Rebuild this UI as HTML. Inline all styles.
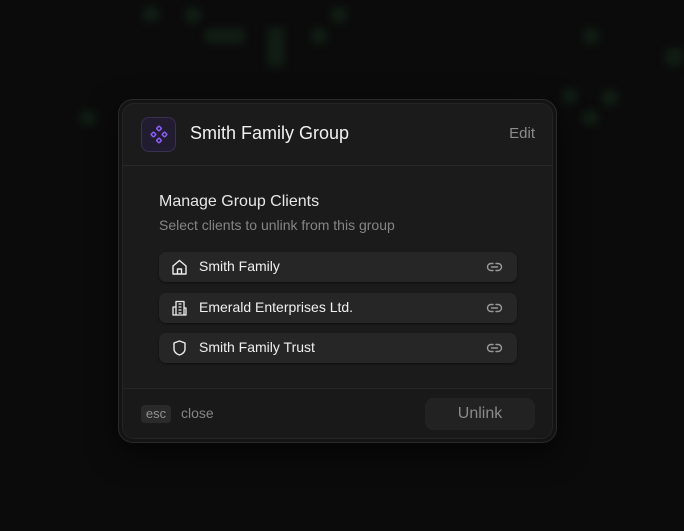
<!DOCTYPE html>
<html><head><meta charset="utf-8"><style>
*{margin:0;padding:0;box-sizing:border-box}
body{width:684px;height:531px;overflow:hidden;background:#0b0b0b;font-family:"Liberation Sans",sans-serif;position:relative}
.blob{position:absolute;border-radius:4px;background:#15281a;filter:blur(4px);opacity:.6}
.outer{position:absolute;left:118px;top:99px;width:439px;height:344px;border-radius:15px;background:#141414;border:1px solid #2a2a2a;box-shadow:0 10px 30px rgba(0,0,0,.6)}
.inner{position:absolute;left:3px;top:3px;right:3px;bottom:3px;border-radius:12px;background:#1b1b1b;border:1px solid #242424;overflow:hidden}
.hdr{position:absolute;left:0;top:0;right:0;height:62px;border-bottom:1px solid #282828}
.ico{position:absolute;left:18px;top:13px;width:35px;height:35px;border-radius:8px;background:#211c30;border:1px solid #3a3052}
.title{position:absolute;left:67px;top:19px;font-size:18px;color:#f0f0f0}
.edit{position:absolute;right:17px;top:21px;font-size:15px;color:#8c8c8c}
.h2{position:absolute;left:36px;top:89px;font-size:16px;color:#e6e6e6}
.sub{position:absolute;left:36px;top:113px;font-size:14px;color:#858585}
.row{position:absolute;left:36px;width:358px;height:30px;border-radius:7px;background:#262626;box-shadow:0 1px 2px rgba(0,0,0,.5)}
.row svg.l{position:absolute;left:12px;top:6px}
.row span{position:absolute;left:40px;top:6px;font-size:14px;color:#f0f0f0}
.row svg.r{position:absolute;right:14px;top:8px}
.ftr{position:absolute;left:0;right:0;bottom:0;height:50px;border-top:1px solid #262626;background:#191919}
.esc{position:absolute;left:18px;top:16px;width:30px;height:18px;border-radius:4px;background:#2a2a2a;color:#909090;font-size:13px;text-align:center;line-height:18px}
.close{position:absolute;left:58px;top:16px;font-size:14px;color:#858585}
.btn{position:absolute;right:17px;top:9px;width:110px;height:32px;border-radius:8px;background:#222;color:#8a8a8a;font-size:16px;text-align:center;line-height:32px}
</style></head><body>
<div class="blob" style="left:143px;top:6px;width:16px;height:16px"></div>
<div class="blob" style="left:185px;top:7px;width:16px;height:16px"></div>
<div class="blob" style="left:205px;top:28px;width:40px;height:16px"></div>
<div class="blob" style="left:267px;top:27px;width:18px;height:40px"></div>
<div class="blob" style="left:311px;top:28px;width:16px;height:16px"></div>
<div class="blob" style="left:331px;top:7px;width:16px;height:16px"></div>
<div class="blob" style="left:583px;top:28px;width:16px;height:16px"></div>
<div class="blob" style="left:665px;top:48px;width:18px;height:18px"></div>
<div class="blob" style="left:80px;top:110px;width:16px;height:16px"></div>
<div class="blob" style="left:562px;top:88px;width:16px;height:16px"></div>
<div class="blob" style="left:602px;top:90px;width:16px;height:16px"></div>
<div class="blob" style="left:582px;top:110px;width:16px;height:16px"></div>
<div class="outer"><div class="inner">
<div class="hdr">
<div class="ico"><svg width="35" height="35" viewBox="0 0 35 35" fill="none" stroke="#8b5cf6" stroke-width="1.5"><rect x="15.2" y="8.7" width="3.6" height="3.6" rx=".8" transform="rotate(45 17 10.5)"/><rect x="9.7" y="14.7" width="3.6" height="3.6" rx=".8" transform="rotate(45 11.5 16.5)"/><rect x="20.7" y="14.7" width="3.6" height="3.6" rx=".8" transform="rotate(45 22.5 16.5)"/><rect x="15.2" y="20.7" width="3.6" height="3.6" rx=".8" transform="rotate(45 17 22.5)"/></svg></div>
<div class="title">Smith Family Group</div>
<div class="edit">Edit</div>
</div>
<div class="h2">Manage Group Clients</div>
<div class="sub">Select clients to unlink from this group</div>
<div class="row" style="top:148px"><svg class="l" width="17" height="18" viewBox="0 0 17 18" fill="none" stroke="#eee" stroke-width="1.4" stroke-linejoin="round"><path d="M2 8L8.5 2.5 15 8v8H2z"/><path d="M6.5 16v-5h4v5"/></svg><span>Smith Family</span><svg class="r" width="17" height="14" viewBox="0 0 17 14" fill="none" stroke="#999" stroke-width="1.4" stroke-linecap="round"><path d="M7 3.5H5a3.5 3.5 0 0 0 0 7h2M10 3.5h2a3.5 3.5 0 0 1 0 7h-2M5.5 7h6"/></svg></div>
<div class="row" style="top:189px"><svg class="l" width="17" height="18" viewBox="0 0 17 18" fill="none" stroke="#eee" stroke-width="1.3" stroke-linejoin="round"><path d="M5 16V2.5h8V16M2 16V8h3M13 9h2v7M1.5 16h14M7.5 5h3M7.5 8h3M7.5 11h3M7.5 14h3"/></svg><span>Emerald Enterprises Ltd.</span><svg class="r" width="17" height="14" viewBox="0 0 17 14" fill="none" stroke="#999" stroke-width="1.4" stroke-linecap="round"><path d="M7 3.5H5a3.5 3.5 0 0 0 0 7h2M10 3.5h2a3.5 3.5 0 0 1 0 7h-2M5.5 7h6"/></svg></div>
<div class="row" style="top:229px"><svg class="l" width="17" height="18" viewBox="0 0 17 18" fill="none" stroke="#eee" stroke-width="1.4" stroke-linejoin="round"><path d="M8.5 2L14 4v6c0 3-2.5 5-5.5 6C5.5 15 3 13 3 10V4z"/></svg><span>Smith Family Trust</span><svg class="r" width="17" height="14" viewBox="0 0 17 14" fill="none" stroke="#999" stroke-width="1.4" stroke-linecap="round"><path d="M7 3.5H5a3.5 3.5 0 0 0 0 7h2M10 3.5h2a3.5 3.5 0 0 1 0 7h-2M5.5 7h6"/></svg></div>
<div class="ftr"><div class="esc">esc</div><div class="close">close</div><div class="btn">Unlink</div></div>
</div></div>
</body></html>
